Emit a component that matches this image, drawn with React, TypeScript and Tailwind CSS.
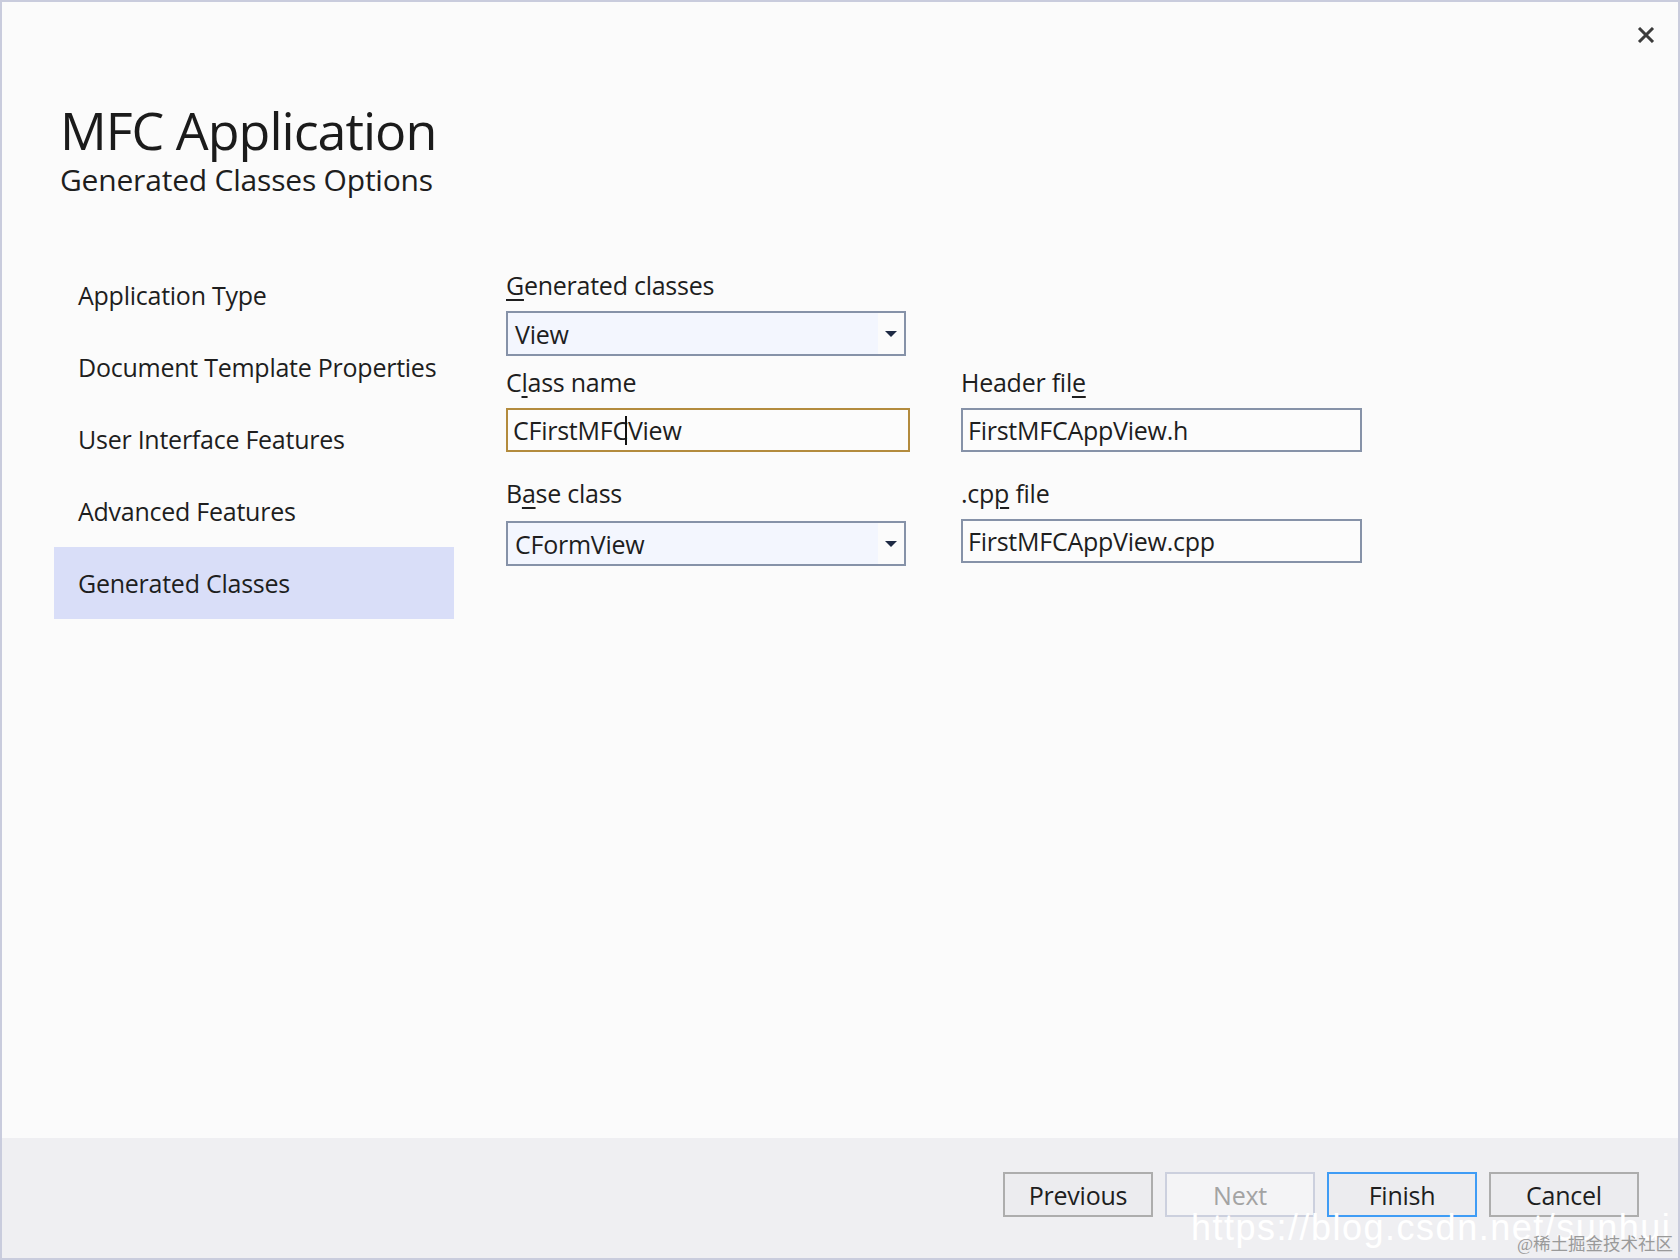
import React from "react";

function Label({ children }: { children: React.ReactNode }) {
  return <div className="h-[32px] leading-[32px] text-[25px] tracking-[-0.25px] text-[#1e1e1e] whitespace-nowrap">{children}</div>;
}

function U({ children }: { children: React.ReactNode }) {
  return <span className="underline decoration-[1.5px] underline-offset-[4px]">{children}</span>;
}

function Dropdown({ value }: { value: string }) {
  return (
    <div className="flex w-[400px] h-[45px] border-2 border-[#8692a8] bg-[#fbfbfb]">
      <div className="flex-1 bg-[#f3f6fe] pl-[7px] flex items-center text-[25px] tracking-[-0.25px] leading-[32px] text-[#1e1e1e]">{value}</div>
      <div className="w-[26px] flex items-center justify-center">
        <svg width="12" height="6" viewBox="0 0 12 6">
          <path d="M0 0 H12 L6 6 Z" fill="#1e2a44" />
        </svg>
      </div>
    </div>
  );
}

function TextBox({ children, focused }: { children: React.ReactNode; focused?: boolean }) {
  return (
    <div
      className={
        "flex items-center h-[44px] border-2 bg-[#fcfcfc] pl-[5px] text-[25px] tracking-[-0.25px] leading-[32px] text-[#1e1e1e] whitespace-nowrap " +
        (focused ? "w-[404px] border-[#b38b3d]" : "w-[401px] border-[#8692a8]")
      }
    >
      {children}
    </div>
  );
}

function NavItem({ children, active }: { children: React.ReactNode; active?: boolean }) {
  return (
    <div
      className={
        "h-[72px] flex items-center pl-[24px] text-[25px] tracking-[-0.25px] leading-[32px] text-[#1e1e1e] whitespace-nowrap " +
        (active ? "bg-[#d9def8]" : "")
      }
    >
      {children}
    </div>
  );
}

function Button({ children, variant }: { children: React.ReactNode; variant?: "disabled" | "default" }) {
  let cls = "border-[#adadad] bg-[#ececef] text-[#1e1e1e]";
  if (variant === "disabled") cls = "border-[#ccd0de] bg-[#f4f4f6] text-[#a3a3a3]";
  if (variant === "default") cls = "border-[#3f9cf5] bg-[#ececef] text-[#1e1e1e]";
  return (
    <div className={"w-[150px] h-[45px] border-2 flex items-center justify-center text-[25px] tracking-[-0.25px] leading-[32px] " + cls}>
      {children}
    </div>
  );
}

export default function App() {
  return (
    <div className="w-[1680px] h-[1260px] border-2 border-[#c9ccdd] flex flex-col font-['Open_Sans',sans-serif] relative overflow-hidden">
      <div className="flex-1 bg-[#fbfbfb] flex flex-col">
        <div className="flex justify-between items-start">
          <div className="pl-[58px] pt-[102px]">
            <div className="text-[52px] leading-[52px] tracking-[-1px] text-[#1b1b1b] whitespace-nowrap">MFC Application</div>
            <div className="mt-[9px] text-[30px] leading-[30px] tracking-[-0.2px] text-[#1e1e1e] whitespace-nowrap">Generated Classes Options</div>
          </div>
          <div className="mt-[24px] mr-[22px] w-[20px] h-[18px] flex items-center justify-center">
            <svg width="18" height="16" viewBox="0 0 18 16">
              <path d="M2 1 L16 15 M16 1 L2 15" stroke="#3b3b3b" strokeWidth="3" fill="none" />
            </svg>
          </div>
        </div>

        <div className="flex mt-[64px]">
          <div className="ml-[52px] w-[400px] flex flex-col">
            <NavItem>Application Type</NavItem>
            <NavItem>Document Template Properties</NavItem>
            <NavItem>User Interface Features</NavItem>
            <NavItem>Advanced Features</NavItem>
            <NavItem active>Generated Classes</NavItem>
          </div>

          <div className="ml-[52px] mt-[7px] flex gap-x-[51px]">
            <div className="w-[404px] flex flex-col">
              <div className="mt-[3px]">
                <Label>
                  <U>G</U>enerated classes
                </Label>
              </div>
              <div className="mt-[10px]">
                <Dropdown value="View" />
              </div>
              <div className="mt-[10px]">
                <Label>
                  C<U>l</U>ass name
                </Label>
              </div>
              <div className="mt-[10px]">
                <TextBox focused>
                  CFirstMFC
                  <span className="inline-block w-[2px] h-[29px] bg-[#111] -ml-[3px] mr-[1px]" />
                  View
                </TextBox>
              </div>
              <div className="mt-[25px]">
                <Label>
                  B<U>a</U>se class
                </Label>
              </div>
              <div className="mt-[12px]">
                <Dropdown value="CFormView" />
              </div>
            </div>

            <div className="w-[401px] flex flex-col pt-[100px]">
              <Label>
                Header fil<U>e</U>
              </Label>
              <div className="mt-[10px]">
                <TextBox>FirstMFCAppView.h</TextBox>
              </div>
              <div className="mt-[25px]">
                <Label>
                  .cp<U>p</U> file
                </Label>
              </div>
              <div className="mt-[10px]">
                <TextBox>FirstMFCAppView.cpp</TextBox>
              </div>
            </div>
          </div>
        </div>
      </div>

      <div className="h-[120px] bg-[#efeff2] flex justify-end items-start pt-[34px] pr-[39px] gap-[12px]">
        <Button>Previous</Button>
        <Button variant="disabled">Next</Button>
        <Button variant="default">Finish</Button>
        <Button>Cancel</Button>
      </div>

      <div className="absolute left-[1189px] top-[1204px] text-[36px] leading-[44px] tracking-[1.5px] text-white font-['Liberation_Sans',sans-serif] whitespace-nowrap pointer-events-none">
        https://blog.csdn.net/sunhui
      </div>
      <div className="absolute right-[5px] top-[1232px] text-[17.5px] leading-[20px] text-[#9a9a9a] font-['Liberation_Serif','Noto_Sans_CJK_SC',serif] whitespace-nowrap pointer-events-none">
        @稀土掘金技术社区
      </div>
    </div>
  );
}
